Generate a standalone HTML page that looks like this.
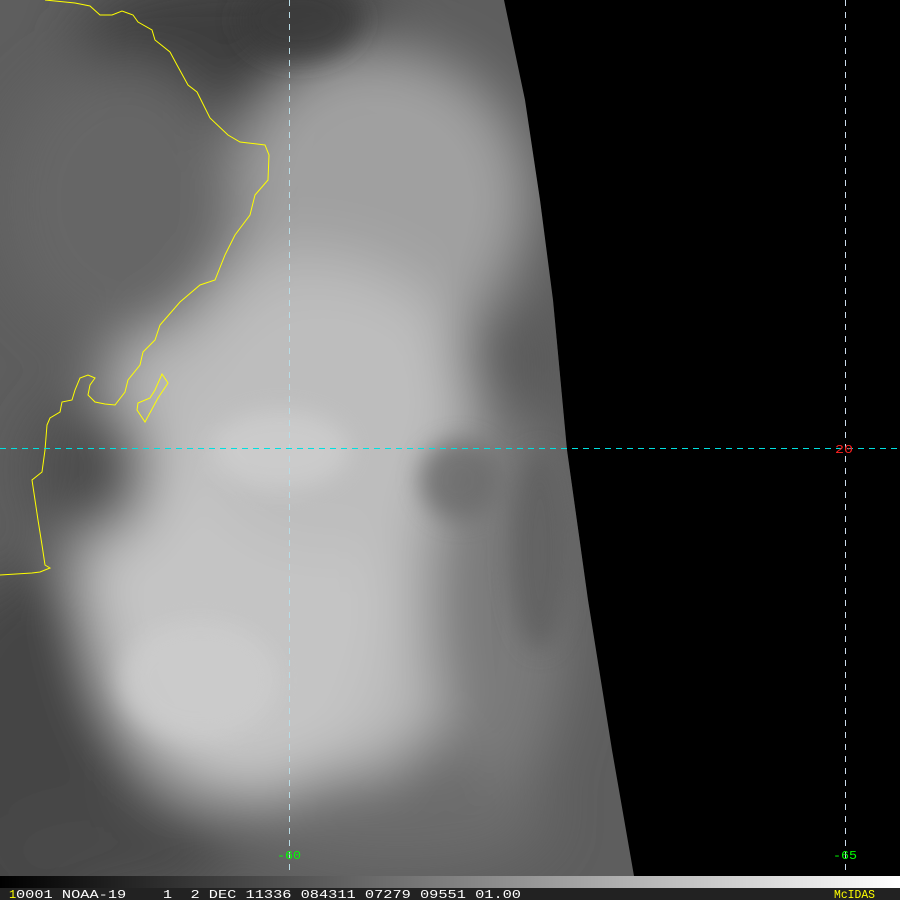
<!DOCTYPE html>
<html><head><meta charset="utf-8"><style>
html,body{margin:0;padding:0;background:#000;width:900px;height:900px;overflow:hidden}
svg{display:block}
</style></head><body>
<svg width="900" height="900" viewBox="0 0 900 900" xmlns="http://www.w3.org/2000/svg">
<defs>
<filter id="b1" x="-30%" y="-30%" width="160%" height="160%"><feGaussianBlur stdDeviation="28"/></filter>
<filter id="b2" x="-30%" y="-30%" width="160%" height="160%"><feGaussianBlur stdDeviation="12"/></filter>
<clipPath id="sw"><path d="M0 0 L504 0 L525 100 L540 200 L553 300 L567 450 L588 600 L612 750 L634 876 L0 876 Z"/></clipPath>
<linearGradient id="bar" x1="0" x2="1"><stop offset="0" stop-color="#000"/><stop offset="1" stop-color="#fff"/></linearGradient>
</defs>
<rect width="900" height="900" fill="#000"/>
<g clip-path="url(#sw)">
<rect width="640" height="876" fill="#5e5e5e"/>
<g filter="url(#b1)">
<ellipse cx="240" cy="40" rx="160" ry="70" fill="#3c3c3c"/>
<ellipse cx="30" cy="760" rx="110" ry="190" fill="#454545"/>
<ellipse cx="110" cy="850" rx="120" ry="50" fill="#4a4a4a"/>
<ellipse cx="380" cy="200" rx="150" ry="150" fill="#a0a0a0"/>
<ellipse cx="300" cy="520" rx="230" ry="270" fill="#b8b8b8"/>
<ellipse cx="240" cy="600" rx="150" ry="200" fill="#c4c4c4"/>
<ellipse cx="330" cy="420" rx="140" ry="130" fill="#bdbdbd"/>
<ellipse cx="500" cy="600" rx="70" ry="200" fill="#7a7a7a"/>
<ellipse cx="510" cy="360" rx="50" ry="60" fill="#5c5c5c"/>
<ellipse cx="400" cy="820" rx="150" ry="50" fill="#6c6c6c"/>
<ellipse cx="90" cy="470" rx="60" ry="70" fill="#4e4e4e"/>
<ellipse cx="120" cy="200" rx="120" ry="140" fill="#666"/>
</g>
<g filter="url(#b2)" opacity="0.8">
<ellipse cx="460" cy="480" rx="40" ry="40" fill="#6a6a6a"/>
<ellipse cx="540" cy="550" rx="30" ry="100" fill="#5e5e5e"/>
<ellipse cx="280" cy="450" rx="70" ry="40" fill="#cfcfcf"/>
<ellipse cx="200" cy="680" rx="80" ry="60" fill="#cdcdcd"/>
<ellipse cx="300" cy="20" rx="60" ry="40" fill="#3a3a3a"/>
</g>
</g>
<polyline fill="none" stroke="#ffff00" stroke-width="1" points="45,0 75,3 90,6 100,15 112,15 122,11 133,15 138,22 152,30 155,40 170,52 177,65 188,85 197,92 210,118 228,135 240,142 265,145 269,155 268,180 255,195 250,215 235,235 225,255 215,280 200,285 180,302 160,325 155,340 153,342 143,352 140,365 128,380 125,392 115,405 105,404 95,402 88,395 90,385 95,378 88,375 80,378 75,390 72,400 62,402 60,412 50,418 47,425 45,450 42,472 32,480 35,500 38,520 42,545 45,565 50,568 40,572 32,573 0,575"/>
<polygon fill="none" stroke="#ffff00" stroke-width="1" points="162,374 168,383 158,398 145,422 137,410 138,403 150,398 155,390"/>
<line x1="289.5" y1="0" x2="289.5" y2="888" stroke="#b8dce6" stroke-dasharray="6,6"/>
<line x1="845.5" y1="0" x2="845.5" y2="888" stroke="#cde" stroke-dasharray="6,6"/>
<line x1="0" y1="448.5" x2="900" y2="448.5" stroke="#00e0e0" stroke-dasharray="6,5"/>
<text x="835" y="453" font-family="Liberation Mono, monospace" font-size="12" fill="#ff2020" textLength="18" lengthAdjust="spacingAndGlyphs">20</text>
<text x="277" y="859" font-family="Liberation Mono, monospace" font-size="12" fill="#00ff00" textLength="24" lengthAdjust="spacingAndGlyphs">-60</text>
<text x="833" y="859" font-family="Liberation Mono, monospace" font-size="12" fill="#00ff00" textLength="24" lengthAdjust="spacingAndGlyphs">-65</text>
<rect x="0" y="876" width="900" height="12" fill="url(#bar)"/>
<rect x="0" y="888" width="900" height="12" fill="#222"/>
<text x="9" y="898" font-family="Liberation Mono, monospace" font-size="12" fill="#ffff00">1</text>
<text x="16" y="898" font-family="Liberation Mono, monospace" font-size="12" fill="#fff" xml:space="preserve" textLength="505" lengthAdjust="spacingAndGlyphs">0001 NOAA-19    1  2 DEC 11336 084311 07279 09551 01.00</text>
<text x="834" y="898" font-family="Liberation Mono, monospace" font-size="12" fill="#ffff00" textLength="41" lengthAdjust="spacingAndGlyphs">McIDAS</text>
</svg>
</body></html>
